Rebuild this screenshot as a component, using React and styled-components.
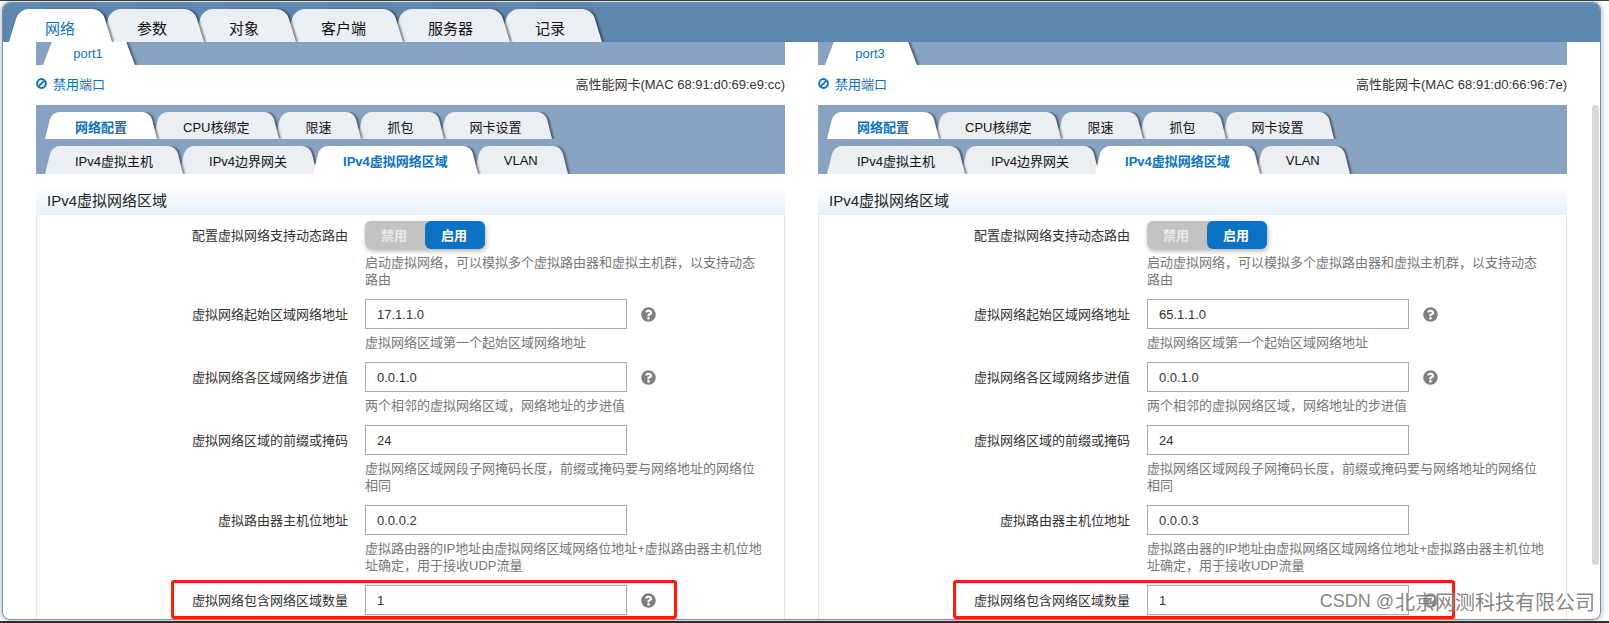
import React from "react";
import styled, { createGlobalStyle } from "styled-components";
import { FaQuestionCircle } from "react-icons/fa";

const GlobalStyle = createGlobalStyle`
  html, body {
    margin: 0;
    height: 623px;
    overflow: hidden;
    background: #fff;
    font-family: "Liberation Sans", "Noto Sans CJK SC", sans-serif;
    font-size: 13px;
    color: #333;
  }
`;

const Page = styled.div`
  display: flex;
  flex-direction: column;
  height: 623px;
`;

const TopEdge = styled.div`
  height: 1px;
  background: #454545;
`;

const BottomEdge = styled.div`
  height: 2px;
  margin-top: auto;
  background: #333;
`;

const Window = styled.div`
  position: relative;
  display: flex;
  flex-direction: column;
  width: 1599px;
  height: 618px;
  margin: 1px 0 0 2px;
  box-sizing: border-box;
  background: #fff;
  border: 1px solid #6b93b8;
  border-radius: 8px;
  box-shadow: 0 0 6px rgba(0, 0, 0, 0.35);
  overflow: hidden;
`;

const TopBar = styled.div`
  display: flex;
  align-items: flex-end;
  flex-shrink: 0;
  height: 39px;
  padding-left: 8px;
  background: #5d87ae;
  overflow: hidden;
`;

/* Trapezoid tab: two skewed halves behind the label */
const Tab = styled.div`
  position: relative;
  z-index: ${(p) => (p.$active ? 20 : 10 - p.$index)};
  display: flex;
  align-items: center;
  justify-content: center;
  box-sizing: border-box;
  flex-shrink: 0;
  white-space: nowrap;
  color: ${(p) => (p.$active ? "#0b72c4" : "#111")};

  &::before,
  &::after {
    content: "";
    position: absolute;
    top: 0;
    bottom: 0;
    width: 60%;
    z-index: -1;
    background: ${(p) => (p.$active ? "#fff" : "#ebeef3")};
  }

  &::before {
    left: -2px;
    transform-origin: bottom left;
  }

  &::after {
    right: -3px;
    transform-origin: bottom right;
    box-shadow: 2px 0 2px rgba(0, 0, 0, 0.45);
  }
`;

const MainTab = styled(Tab)`
  height: 33px;
  padding: 3px 34px 0;
  margin-left: ${(p) => (p.$index === 0 ? 0 : -6)}px;
  font-size: 15px;

  &::before {
    border-top-left-radius: 9px;
    transform: skewX(-17deg);
  }

  &::after {
    border-top-right-radius: 9px;
    transform: skewX(17deg);
  }
`;

const PortTab = styled(Tab)`
  height: 23px;
  padding: 0 32px 1px;
  font-size: 13px;
  width: 90px;

  &::before {
    left: 0;
    transform: skewX(-21deg);
  }

  &::after {
    right: -2px;
    transform: skewX(21deg);
  }
`;

const SubTab = styled(Tab)`
  height: ${(p) => p.$height}px;
  padding: ${(p) => p.$textTop}px 32px 0;
  margin-left: ${(p) => (p.$index === 0 ? 0 : -8)}px;
  font-weight: ${(p) => (p.$active ? 700 : 400)};

  &::before {
    left: 2px;
    border-top-left-radius: 8px;
    transform: skewX(-14deg);
  }

  &::after {
    right: 2px;
    border-top-right-radius: 8px;
    transform: skewX(14deg);
  }
`;

const Content = styled.div`
  display: flex;
  gap: 33px;
  flex: 1;
  padding-left: 33px;
  overflow: hidden;
`;

const PortPanel = styled.section`
  width: 749px;
  flex-shrink: 0;
`;

const PortStrip = styled.div`
  display: flex;
  align-items: flex-end;
  height: 23px;
  padding-left: 7px;
  background: #87a3c1;
  overflow: hidden;
`;

const PortInfo = styled.div`
  display: flex;
  align-items: center;
  justify-content: space-between;
  height: 40px;
  box-sizing: border-box;
  padding-bottom: 3px;
`;

const DisableLink = styled.a`
  display: flex;
  align-items: center;
  gap: 6px;
  padding-bottom: 1px;
  color: #0b72c4;
`;

const CardName = styled.span`
  color: #333;
`;

const TabsPanel = styled.div`
  display: flex;
  flex-direction: column;
  gap: 7px;
  height: 69px;
  box-sizing: border-box;
  padding: 7px 0 0 7px;
  background: #87a3c1;
`;

const TabRow = styled.div`
  display: flex;
  align-items: flex-end;
  overflow: hidden;
`;

const SectionBox = styled.div`
  margin-top: 11px;
  border: solid #e0ecf5;
  border-width: 0 1px;
`;

const SectionTitle = styled.h3`
  display: flex;
  align-items: center;
  height: 30px;
  box-sizing: border-box;
  margin: 0 -1px;
  padding: 0 0 1px 11px;
  font-size: 15px;
  font-weight: 400;
  color: #222;
  background: linear-gradient(#fff, #e5f1fa);
`;

const FormBody = styled.div`
  display: flex;
  flex-direction: column;
  padding-top: 6px;
`;

const FormRow = styled.div`
  position: relative;
  display: grid;
  grid-template-columns: 311px 400px;
  column-gap: 17px;
  margin-bottom: 11px;
`;

const Label = styled.label`
  display: flex;
  align-items: center;
  justify-content: flex-end;
  height: ${(p) => (p.$toggle ? 28 : 30)}px;
  box-sizing: border-box;
  padding-bottom: 2px;
  white-space: nowrap;
  color: #333;
`;

const FieldLine = styled.div`
  display: flex;
  align-items: center;
  gap: 14px;
`;

const TextField = styled.input`
  width: 262px;
  height: 30px;
  box-sizing: border-box;
  padding: 0 11px;
  border: 1px solid #aaa;
  border-radius: 0;
  outline: none;
  font: inherit;
  color: #333;
  background: #fff;
`;

const Help = styled.div`
  grid-column: 2;
  margin-top: 5px;
  line-height: 17px;
  color: #777;
`;

const Switch = styled.div`
  display: flex;
  width: 120px;
  height: 28px;
  border-radius: 6px;
  background: #c2c2c2;
  box-shadow: 1px 2px 5px rgba(0, 0, 0, 0.3);
`;

const SwitchOption = styled.span`
  display: flex;
  align-items: center;
  justify-content: center;
  width: 60px;
  box-sizing: border-box;
  padding: 0 2px 2px 0;
  border-radius: 6px;
  font-weight: 700;
  color: ${(p) => (p.$on ? "#fff" : "#e8e8e8")};
  background: ${(p) => (p.$on ? "#0b72c4" : "transparent")};
`;

const HelpIcon = styled(FaQuestionCircle)`
  width: 15px;
  height: 15px;
  color: #808080;
`;

/* Red marker round the last form row */
const Highlight = styled.div`
  position: absolute;
  top: -5px;
  left: 134px;
  width: ${(p) => p.$width}px;
  height: 39px;
  box-sizing: border-box;
  border: 3px solid #ff1a0d;
  border-radius: 3px;
  pointer-events: none;
`;

const ScrollThumb = styled.div`
  position: absolute;
  top: 102px;
  right: 1px;
  width: 7px;
  height: 460px;
  border-radius: 4px;
  background: #d9d9d9;
`;

const Watermark = styled.div`
  position: absolute;
  right: 5px;
  bottom: 3px;
  display: flex;
  align-items: center;
  gap: 1px;
  font-size: 18px;
  white-space: nowrap;
  color: rgba(100, 100, 100, 0.8);
  text-shadow: 0 0 2px #fff;
`;

const WatermarkName = styled.span`
  font-size: 20px;
`;

const BanIcon = () => (
  <svg width="11" height="11" viewBox="0 0 11 11" fill="none" stroke="#0b72c4" strokeWidth="2">
    <circle cx="5.5" cy="5.5" r="4.4" />
    <line x1="2.4" y1="8.6" x2="8.6" y2="2.4" />
  </svg>
);

const mainTabs = ["网络", "参数", "对象", "客户端", "服务器", "记录"];
const configTabs = ["网络配置", "CPU核绑定", "限速", "抓包", "网卡设置"];
const ipv4Tabs = ["IPv4虚拟主机", "IPv4边界网关", "IPv4虚拟网络区域", "VLAN"];

const ports = [
  { name: "port1", mac: "68:91:d0:69:e9:cc", start: "17.1.1.0", router: "0.0.0.2", marker: 506 },
  { name: "port3", mac: "68:91:d0:66:96:7e", start: "65.1.1.0", router: "0.0.0.3", marker: 502 },
];

function Field({ label, value, help, hint, marker }) {
  return (
    <FormRow>
      <Label>{label}</Label>
      <FieldLine>
        <TextField defaultValue={value} />
        {hint && <HelpIcon />}
      </FieldLine>
      {help && <Help>{help}</Help>}
      {marker && <Highlight $width={marker} />}
    </FormRow>
  );
}

function Port({ port }) {
  return (
    <PortPanel>
      <PortStrip>
        <PortTab $active $index={0}>{port.name}</PortTab>
      </PortStrip>
      <PortInfo>
        <DisableLink>
          <BanIcon />
          禁用端口
        </DisableLink>
        <CardName>高性能网卡(MAC {port.mac})</CardName>
      </PortInfo>
      <TabsPanel>
        <TabRow>
          {configTabs.map((t, i) => (
            <SubTab key={t} $height={27} $textTop={2} $index={i} $active={i === 0}>{t}</SubTab>
          ))}
        </TabRow>
        <TabRow>
          {ipv4Tabs.map((t, i) => (
            <SubTab key={t} $height={28} $textTop={1} $index={i} $active={i === 2}>{t}</SubTab>
          ))}
        </TabRow>
      </TabsPanel>
      <SectionBox>
        <SectionTitle>IPv4虚拟网络区域</SectionTitle>
        <FormBody>
          <FormRow>
            <Label $toggle>配置虚拟网络支持动态路由</Label>
            <Switch>
              <SwitchOption>禁用</SwitchOption>
              <SwitchOption $on>启用</SwitchOption>
            </Switch>
            <Help>启动虚拟网络，可以模拟多个虚拟路由器和虚拟主机群，以支持动态路由</Help>
          </FormRow>
          <Field label="虚拟网络起始区域网络地址" value={port.start} help="虚拟网络区域第一个起始区域网络地址" hint />
          <Field label="虚拟网络各区域网络步进值" value="0.0.1.0" help="两个相邻的虚拟网络区域，网络地址的步进值" hint />
          <Field label="虚拟网络区域的前缀或掩码" value="24" help="虚拟网络区域网段子网掩码长度，前缀或掩码要与网络地址的网络位相同" />
          <Field label="虚拟路由器主机位地址" value={port.router} help="虚拟路由器的IP地址由虚拟网络区域网络位地址+虚拟路由器主机位地址确定，用于接收UDP流量" />
          <Field label="虚拟网络包含网络区域数量" value="1" hint marker={port.marker} />
        </FormBody>
      </SectionBox>
    </PortPanel>
  );
}

export default function App() {
  return (
    <Page>
      <GlobalStyle />
      <TopEdge />
      <Window>
        <TopBar>
          {mainTabs.map((t, i) => (
            <MainTab key={t} $index={i} $active={i === 0}>{t}</MainTab>
          ))}
        </TopBar>
        <Content>
          {ports.map((p) => (
            <Port key={p.name} port={p} />
          ))}
        </Content>
        <ScrollThumb />
        <Watermark>
          CSDN @<WatermarkName>北京网测科技有限公司</WatermarkName>
        </Watermark>
      </Window>
      <BottomEdge />
    </Page>
  );
}
